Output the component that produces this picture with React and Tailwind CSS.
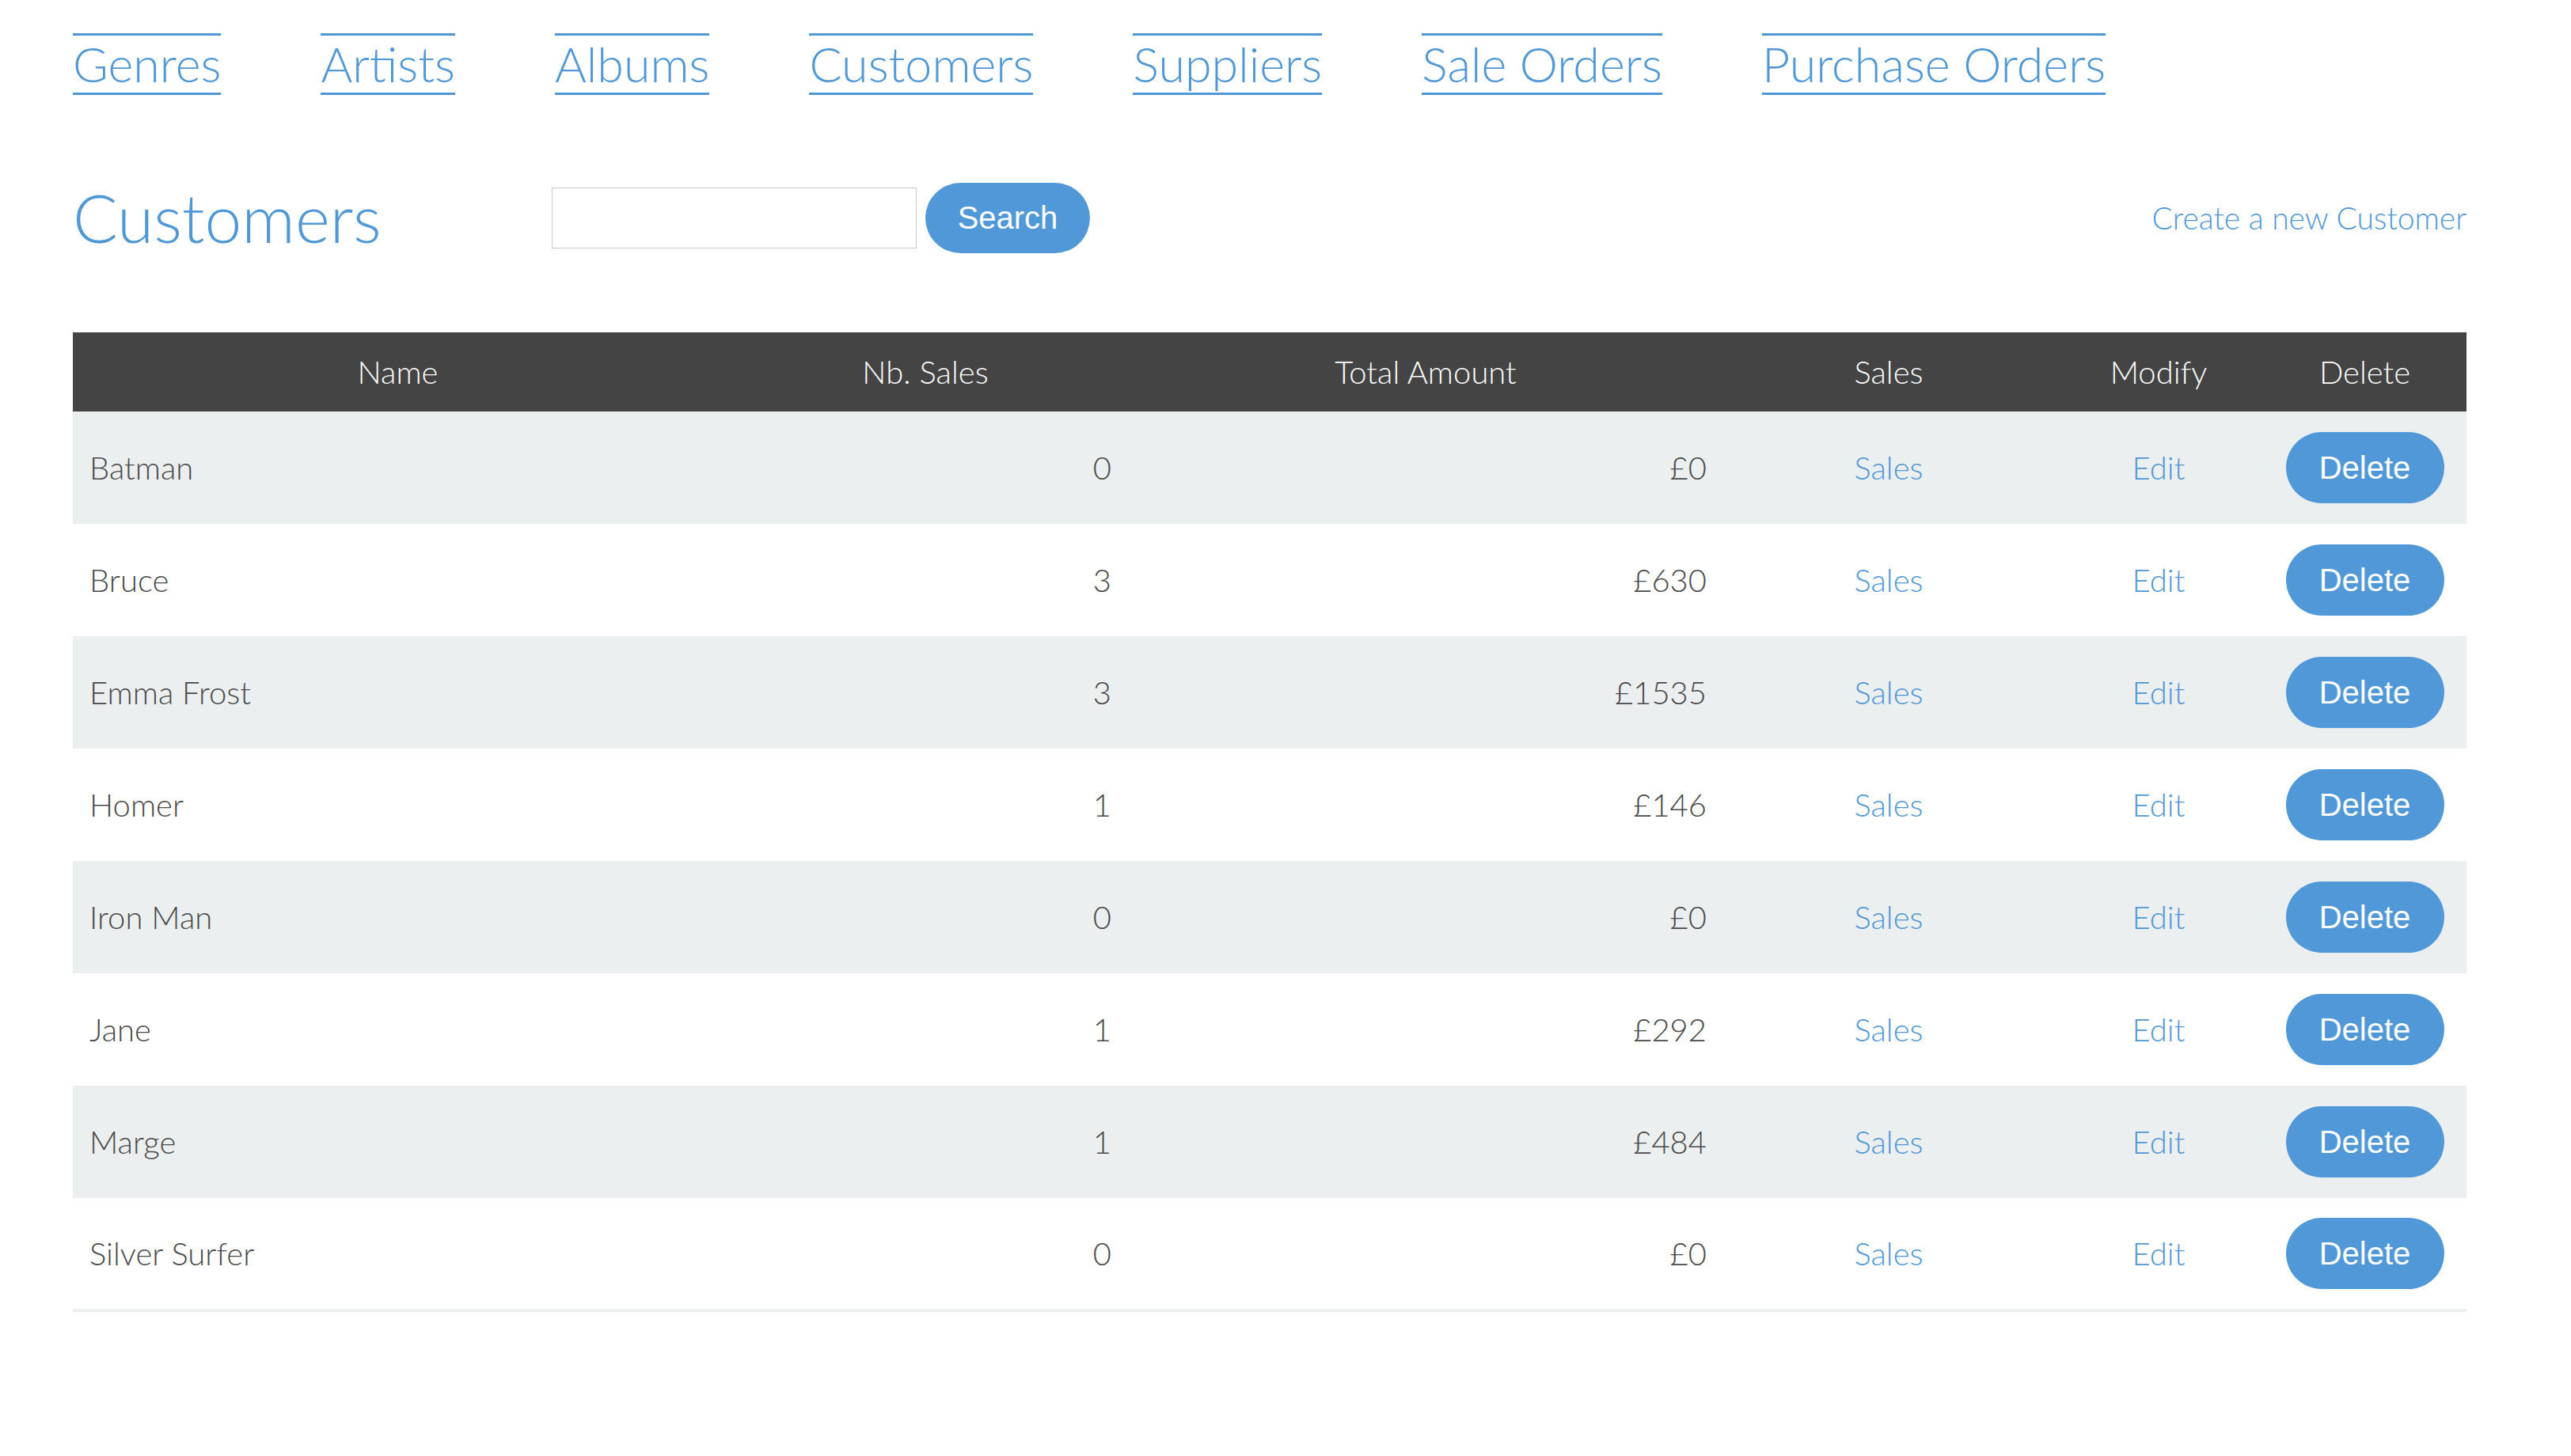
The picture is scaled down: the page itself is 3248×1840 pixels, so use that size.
import React from "react";

const navLinks = ["Genres", "Artists", "Albums", "Customers", "Suppliers", "Sale Orders", "Purchase Orders"];

const customers = [
  { name: "Batman", sales: 0, total: "£0" },
  { name: "Bruce", sales: 3, total: "£630" },
  { name: "Emma Frost", sales: 3, total: "£1535" },
  { name: "Homer", sales: 1, total: "£146" },
  { name: "Iron Man", sales: 0, total: "£0" },
  { name: "Jane", sales: 1, total: "£292" },
  { name: "Marge", sales: 1, total: "£484" },
  { name: "Silver Surfer", sales: 0, total: "£0" },
];

export default function App() {
  return (
    <div className="min-h-screen bg-white font-['Lato',sans-serif]">
      <div className="w-[3116px] pl-[92px]">
        {/* top nav */}
        <nav className="flex gap-[126px] pt-[42px]">
          {navLinks.map((l) => (
            <a
              key={l}
              href="#"
              className="border-y-[3px] border-[#5097d6] text-[61px] leading-[72px] font-light text-[#5097d6]"
            >
              {l}
            </a>
          ))}
        </nav>

        {/* title + search */}
        <div className="mt-[100px] flex h-[110px] items-center">
          <h1 className="w-[605px] text-[84px] leading-[84px] font-light text-[#5097d6]">Customers</h1>
          <input type="text" className="h-[77px] w-[461px] border border-[#c8c8c8] px-3 text-[36px] outline-none" />
          <button className="ml-[11px] h-[89px] w-[208px] rounded-full bg-[#5198d8] text-[40px] font-normal text-white font-['Liberation_Sans',Arial,sans-serif]">
            Search
          </button>
          <a href="#" className="ml-auto text-[39px] font-light text-[#5097d6]">
            Create a new Customer
          </a>
        </div>

        {/* table */}
        <table className="mt-[90px] w-[3024px] table-fixed border-collapse text-[40px]">
          <colgroup>
            <col className="w-[821px]" />
            <col className="w-[512px]" />
            <col className="w-[752px]" />
            <col className="w-[418px]" />
            <col className="w-[264px]" />
            <col className="w-[257px]" />
          </colgroup>
          <thead>
            <tr className="h-[100px] bg-[#444444] text-white">
              <th className="font-light">Name</th>
              <th className="font-light">Nb. Sales</th>
              <th className="font-light">Total Amount</th>
              <th className="font-light">Sales</th>
              <th className="font-light">Modify</th>
              <th className="font-light">Delete</th>
            </tr>
          </thead>
          <tbody className="border-b-4 border-[#ebeff0]">
            {customers.map((c, i) => (
              <tr key={c.name} className={i % 2 === 0 ? "h-[142px] bg-[#ebeff0]" : "h-[142px] bg-white"}>
                <td className="px-[21px] font-light text-[#4a4a4a]">{c.name}</td>
                <td className="px-[21px] text-right font-light text-[#4a4a4a]">{c.sales}</td>
                <td className="px-[21px] text-right font-light text-[#4a4a4a]">{c.total}</td>
                <td className="text-center font-light text-[#5097d6]">
                  <a href="#">Sales</a>
                </td>
                <td className="text-center font-light text-[#5097d6]">
                  <a href="#">Edit</a>
                </td>
                <td className="text-center">
                  <button className="h-[90px] w-[200px] rounded-full bg-[#5198d8] text-[40px] font-normal text-white font-['Liberation_Sans',Arial,sans-serif]">
                    Delete
                  </button>
                </td>
              </tr>
            ))}
          </tbody>
        </table>
      </div>
    </div>
  );
}
